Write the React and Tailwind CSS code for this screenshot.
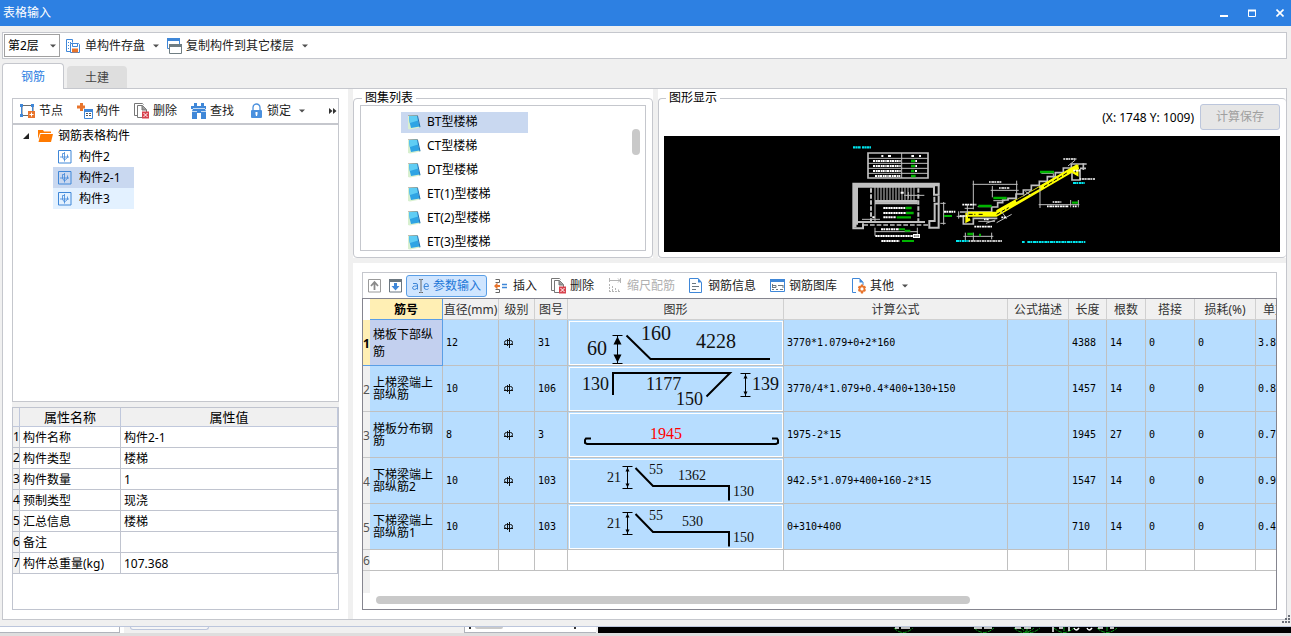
import React, { useState } from "react";
import clsx from "clsx";

const atlasItems = ["BT型楼梯", "CT型楼梯", "DT型楼梯", "ET(1)型楼梯", "ET(2)型楼梯", "ET(3)型楼梯"];

const treeItems = ["构件2", "构件2-1", "构件3"];

const properties = [
  ["构件名称", "构件2-1"],
  ["构件类型", "楼梯"],
  ["构件数量", "1"],
  ["预制类型", "现浇"],
  ["汇总信息", "楼梯"],
  ["备注", ""],
  ["构件总重量(kg)", "107.368"],
];

const columns = [
  { title: "筋号", width: "w-[73px]" },
  { title: "直径(mm)", width: "w-[56px]" },
  { title: "级别", width: "w-[36px]" },
  { title: "图号", width: "w-[33px]" },
  { title: "图形", width: "w-[216px]" },
  { title: "计算公式", width: "w-[224px]" },
  { title: "公式描述", width: "w-[61px]" },
  { title: "长度", width: "w-[38px]" },
  { title: "根数", width: "w-[39px]" },
  { title: "搭接", width: "w-[49px]" },
  { title: "损耗(%)", width: "w-[61px]" },
  { title: "单重(kg)", width: "w-[60px]" },
];

const bars = [
  { name: "梯板下部纵筋", diameter: 12, code: 31, shape: <ShapeBent />, formula: "3770*1.079+0+2*160", length: 4388, count: 14, weight: "3.8" },
  { name: "上梯梁端上部纵筋", diameter: 10, code: 106, shape: <ShapeTop />, formula: "3770/4*1.079+0.4*400+130+150", length: 1457, count: 14, weight: "0.8" },
  { name: "梯板分布钢筋", diameter: 8, code: 3, shape: <ShapeHook />, formula: "1975-2*15", length: 1945, count: 27, weight: "0.7" },
  { name: "下梯梁端上部纵筋2", diameter: 10, code: 103, shape: <ShapeStep length="1362" x={110} drop="130" />, formula: "942.5*1.079+400+160-2*15", length: 1547, count: 14, weight: "0.9" },
  { name: "下梯梁端上部纵筋1", diameter: 10, code: 103, shape: <ShapeStep length="530" x={114} drop="150" />, formula: "0+310+400", length: 710, count: 14, weight: "0.4" },
];

/* ---------- bar shapes ---------- */

function ShapeFrame({ children }) {
  return (
    <svg viewBox="0 0 215 45" className="block h-[45px] w-full" fill="none" stroke="#000" strokeWidth="2">
      <rect x="1.5" y="1.5" width="213" height="43" stroke="#fff" strokeWidth="1" />
      {children}
    </svg>
  );
}

function Num({ x, y, size, color = "#111", children }) {
  return (
    <text x={x} y={y} fontSize={size} fill={color} stroke="none" fontFamily="'Liberation Serif', serif">
      {children}
    </text>
  );
}

function Dimension({ x, top, bottom, head = 3 }) {
  const h = head * 2;
  return (
    <g strokeWidth="1">
      <path d={`M${x - 5} ${top}h10M${x - 5} ${bottom}h10M${x} ${top}V${bottom}`} />
      <path
        d={`M${x} ${top + 1}l${head} ${h}h${-head * 2}zM${x} ${bottom - 1}l${head} ${-h}h${-head * 2}z`}
        fill="#000"
        stroke="none"
      />
    </g>
  );
}

function ShapeBent() {
  return (
    <ShapeFrame>
      <Dimension x={49.5} top={15.5} bottom={43.5} head={4} />
      <path d="M58.5 15.5L82.5 39H202" />
      <Num x={19} y={35} size={20}>60</Num>
      <Num x={73} y={20} size={20}>160</Num>
      <Num x={128} y={28} size={20}>4228</Num>
    </ShapeFrame>
  );
}

function ShapeTop() {
  return (
    <ShapeFrame>
      <path d="M45 29V7H162L138.5 30.5" />
      <Dimension x={177.5} top={7.5} bottom={30.5} head={2} />
      <Num x={14} y={24} size={18}>130</Num>
      <Num x={78} y={24} size={18}>1177</Num>
      <Num x={108} y={39} size={18}>150</Num>
      <Num x={184} y={24} size={18}>139</Num>
    </ShapeFrame>
  );
}

function ShapeHook() {
  return (
    <ShapeFrame>
      <path d="M23 26.5H18L17 28V31L19 32H208L210 31V28L209 26.5H204" />
      <Num x={82} y={27} size={16} color="#f00">1945</Num>
    </ShapeFrame>
  );
}

function ShapeStep({ length, x, drop }) {
  return (
    <ShapeFrame>
      <Dimension x={59.5} top={8.5} bottom={30.5} head={2} />
      <path d="M67.5 10L85 28H161V42.5" />
      <Num x={39} y={24} size={14}>21</Num>
      <Num x={81} y={16} size={14}>55</Num>
      <Num x={x} y={22} size={14}>{length}</Num>
      <Num x={165} y={38} size={14}>{drop}</Num>
    </ShapeFrame>
  );
}

function GradeMark() {
  return (
    <svg viewBox="0 0 10 10" className="block size-[10px]" fill="none" stroke="#111">
      <path d="M3.500 1v7M5.500 0v10M0 6.500h9" />
      <rect x=".5" y="2.500" width="8" height="4" rx="2" />
    </svg>
  );
}

/* ---------- icons ---------- */

function Icon({ children }) {
  return (
    <svg viewBox="0 0 16 16" className="size-4 shrink-0" fill="none">
      {children}
    </svg>
  );
}

const Caret = ({ className }) => (
  <svg viewBox="0 0 6 4" className={clsx("h-1 w-[6px] shrink-0", className)}>
    <path d="M0 .5h6L3 3.500z" fill="#505050" />
  </svg>
);

const SaveIcon = () => (
  <Icon>
    <path d="M.5 13.500V1.500h6v3M.5 13.500H4M2 4.500h1M4 4.500h1M2 7.500h1M2 10.500h1" stroke="#3f87d8" />
    <path d="M4.500 5.500h8l1 1v8h-9z" fill="#fff" stroke="#3f87d8" />
    <path d="M6.500 5.500h5v3h-5z" fill="#fff" stroke="#3f87d8" />
    <path d="M6 10.500h6v4H6z" fill="#e8742c" />
  </Icon>
);

const CopyFloorIcon = () => (
  <Icon>
    <path d="M.5.500h12v10h-12z" fill="#fff" stroke="#3f87d8" />
    <path d="M0 0h13v3H0z" fill="#3f87d8" />
    <path d="M2.500 6.500h12v9h-12z" fill="#fff" stroke="#6f7d82" />
    <path d="M2 6h13v3H2z" fill="#6f7d82" />
  </Icon>
);

const NodeIcon = () => (
  <Icon>
    <path d="M2 2.500h11v10H2z" stroke="#444" strokeWidth=".8" />
    <path d="M0 1h3v3H0zM11 1h3v3h-3zM0 11h3v3H0z" fill="#3f87d8" />
    <path d="M1.500 3v9M12.500 3v5" stroke="#3f87d8" />
    <path d="M8 8h7v7H8z" fill="#e8742c" />
    <path d="M9.500 11.500h4M11.500 9.500v4" stroke="#fff" />
  </Icon>
);

const ComponentIcon = () => (
  <Icon>
    <path d="M3 0h3v2.500h2v3H6V8H3V5.500H0v-3h3z" fill="#e8742c" />
    <path d="M7.500 6.500h8v9h-8z" fill="#fff" stroke="#3f87d8" />
    <path d="M7 6h9v3H7z" fill="#3f87d8" />
    <path d="M9 10.500h2M12 10.500h2M9 12.500h2M12 12.500h2" stroke="#555" />
  </Icon>
);

const DeleteIcon = () => (
  <Icon>
    <path d="M3 12.500H.5V.500h8l1 1" stroke="#777" />
    <path d="M3.500 2.500h5l4 4v8h-9z" fill="#fff" stroke="#777" />
    <path d="M8 2.500v4.500h4.500" fill="#999" stroke="#777" />
    <path d="M8 8.500h7v7H8z" fill="#d8434e" />
    <path d="M9.500 10l4 4M13.500 10l-4 4" stroke="#fff" />
  </Icon>
);

const FindIcon = () => (
  <Icon>
    <path d="M3 0h3v3h4V0h3v3h2v3h-1l1 2v8h-5v-6H6v6H1V8l1-2H0V3h3z" fill="#3f87d8" />
    <path d="M1 8.500h5M10 8.500h5M2 5.500h12" stroke="#fff" strokeWidth=".7" />
  </Icon>
);

const LockIcon = () => (
  <Icon>
    <path d="M5 8V4.500a3.500 3.500 0 0 1 7 0V8" stroke="#4a90de" strokeWidth="1.300" />
    <rect x="3" y="7" width="11" height="8" rx="1" fill="#4a90de" />
    <path d="M7.500 9h2v2l-.5 2h-1l-.5-2z" fill="#fff" />
  </Icon>
);

const FolderIcon = () => (
  <Icon>
    <path d="M1 2h5l1 1.500h7V5H3l-2 6z" fill="#ff7a00" />
    <path d="M3.500 6H16l-2 8H1.500z" fill="#ff7a00" />
  </Icon>
);

const PartIcon = () => (
  <svg viewBox="0 0 14 14" className="size-[14px] shrink-0" fill="none" stroke="#3f87d8">
    <path d="M.5.500h12.500v12.500H.5z" />
    <path d="M6.500 2v9.500M2 7h9" strokeWidth=".8" />
    <path d="M6.500 3.500h-2v4l2 2.500 3-2.500v-3" strokeWidth=".8" />
  </svg>
);

const NotebookIcon = () => (
  <svg viewBox="0 0 14 16" className="h-4 w-[14px] shrink-0">
    <path d="M1 2l9-1 3.500 12.500-10.500 2-2-.5z" fill="#d8f0d0" />
    <path d="M2 2l8-.5 2.500 11L4 14 2.500 8z" fill="#2fa4e4" />
    <path d="M2 2l8-.5 1 5L3 9z" fill="#5fcdf4" />
    <path d="M10 1.500l1 .5 2.500 11-1 .5z" fill="#1d6fb5" />
    <path d="M1.500 1.500h9" stroke="#8b7d6a" strokeDasharray="1 1" />
  </svg>
);

const MoveIcon = ({ down }) => (
  <svg viewBox="0 0 13 14" className="h-[14px] w-[13px] shrink-0" fill="none">
    <path d="M.5.500h12v12.500H.5z" stroke={down ? "#6b7780" : "#9a9a9a"} />
    {down ? (
      <>
        <path d="M0 0h13v3H0z" fill="#6b7780" />
        <path d="M5 4h3v3h2.500l-4 4.500-4-4.500H5z" fill="#3f87d8" />
      </>
    ) : (
      <path d="M6.500 11V4M3 7l3.500-4L10 7" stroke="#8a8a8a" strokeWidth="1.800" />
    )}
  </svg>
);

const InsertIcon = () => (
  <Icon>
    <path d="M1.500 1.500h4v3h-4M1.500 11.500h4v3h-4" stroke="#666" />
    <path d="M8 6.500h5M8 9.500h5" stroke="#3f87d8" strokeWidth="1.500" />
    <path d="M0 8l3.500-3.500V7H6v2H3.500v2.500z" fill="#e8742c" />
  </Icon>
);

const ScaleIcon = () => (
  <Icon>
    <path d="M1.500 0v4M1.500 2.500h11M12.500 0v5M10 .5l2 2-2 2" stroke="#b4b4b4" />
    <path d="M1.500 6v8M4.500 8v6M7.500 10v4M10.500 11.500V14M1 13.500h12" stroke="#b4b4b4" strokeDasharray="2 1" />
  </Icon>
);

const InfoIcon = () => (
  <Icon>
    <path d="M.5.500h8.500l3.500 4v10H.5z" stroke="#3f87d8" fill="#fff" />
    <path d="M9 0l4 4.500H9z" fill="#3f87d8" />
    <path d="M3 5.500h4M3 8.500h7M3 11.500h4" stroke="#6b7780" />
  </Icon>
);

const LibraryIcon = () => (
  <Icon>
    <path d="M.5 1.500h14v12H.5z" fill="#fff" stroke="#3f87d8" />
    <path d="M0 1h15v3H0z" fill="#3f87d8" />
    <path d="M2.500 6v3M2 9.500h4v-2H3M8 7.500h5M2 11.500h2M6 11.500h2M10 11.500h3M13 7v3" stroke="#6b7780" />
  </Icon>
);

const OtherIcon = () => (
  <Icon>
    <path d="M5 14.500H1.500V.500h7l3.500 4V7" stroke="#3f87d8" fill="#fff" />
    <path d="M8.500 0l4 4.500h-4z" fill="#3f87d8" />
    <path
      d="M10 6.500h2l.5 1.500 1.500-.3 1 1.700-1 1.300 1 1.300-1 1.700-1.500-.2L12 15.500h-2l-.6-2-1.500.2-1-1.700 1-1.300-1-1.300 1-1.700 1.500.3z"
      fill="#e8742c"
    />
    <circle cx="11" cy="10.900" r="1.600" fill="#fff" />
  </Icon>
);

const ParamIcon = () => (
  <svg viewBox="0 0 18 16" className="h-4 w-[18px] shrink-0" fill="none" stroke="#3f87d8">
    <path d="M1 5.500h3q1.500 0 1.500 1.500v4.500M5.500 8H2.500Q.5 8.500.5 9.800T2.300 11.500Q4.500 11.500 5.500 9.500" />
    <path d="M12 8.500h4.500Q16.500 5.500 14.300 5.500T12 8.500t2.500 3q1.300 0 2-.8" />
    <path d="M7 1.500h1.500L9 2l.5-.5H11M9 2v11.500M7 14.500h1.500l.5-.5.5.5H11" stroke="#666" />
  </svg>
);

/* ---------- pieces ---------- */

function ToolButton({ icon, label, caret, disabled, active, padding = "px-[7px]" }) {
  return (
    <button
      type="button"
      disabled={disabled}
      className={clsx(
        "flex h-[22px] shrink-0 items-center gap-[3px] rounded-[3px] whitespace-nowrap",
        padding,
        disabled && "text-[#b0b0b0]",
        active && "border border-[#5a9ee6] bg-[#cfe5ff] text-[#1f78d8]",
        !disabled && !active && "text-[#222]"
      )}
    >
      {icon}
      {label}
      {caret && <Caret className="ml-[5px]" />}
    </button>
  );
}

function GroupBox({ title, className = "border-r px-[6px]", children }) {
  return (
    <fieldset className={clsx("h-[167px] min-w-0 rounded-[4px] border-y border-l border-[#c5c7cd] pb-[6px]", className)}>
      <legend className="ml-[2px] px-[3px] text-black leading-[14px]">{title}</legend>
      {children}
    </fieldset>
  );
}

// coordinates are in thirds of a pixel of the 116px high canvas
function StairDrawing() {
  return (
    <svg viewBox="0 0 616 116" className="block h-full w-full" fill="none">
      <g transform="translate(176 0) scale(.33333)">
        {/* parameter table */}
        <path d="M84 51h180v75H84z" stroke="#c0c0c0" strokeWidth="5" />
        <path d="M84 67h180M84 82h180M84 97h180M84 112h180M185 51v75" stroke="#c0c0c0" strokeWidth="3" />
        <path d="M124 60h6M144 60h9M214 60h8M237 60h6" stroke="#fff" strokeWidth="6" />
        <path d="M99 75h84M99 90h84M99 105h84M105 120h76" stroke="#fff" strokeWidth="6" strokeDasharray="7 2 4 1" />
        <path d="M213 75h12M213 90h12M213 105h10M213 120h14" stroke="#00b400" strokeWidth="7" />
        <path d="M226 75h5M226 90h5M225 105h6" stroke="#fff" strokeWidth="6" />
        <path d="M39 34h24M66 34h28" stroke="#00e5ee" strokeWidth="7" strokeDasharray="8 1 4 1" />

        {/* plan */}
        <path d="M69 262v15H40V143h256v33h-14v-24H51v114" stroke="#c0c0c0" strokeWidth="6" />
        <path d="M40 146h258" stroke="#c0c0c0" strokeWidth="10" />
        <path d="M45 146v128" stroke="#c0c0c0" strokeWidth="9" />
        <path d="M283 182v16M296 180v20M284 203h12v72h-28v-20h16z" stroke="#c0c0c0" strokeWidth="6" />
        <path d="M51 258h204M105 202h128" stroke="#c0c0c0" strokeWidth="6" />
        <path d="M105 196h128" stroke="#c0c0c0" strokeWidth="8" />
        <path d="M93 157v100M235 157v100" stroke="#c0c0c0" strokeWidth="6" strokeDasharray="13 5" />
        <path d="M70 267h195" stroke="#c0c0c0" strokeWidth="5" strokeDasharray="14 6" />
        <path
          d="M105 153v104M114 153v40M123 153v40M132 153v40M141 153v40M150 153v40M159 153v40M168 153v40M177 153v40M186 153v40M195 153v40M204 153v40M213 153v40M222 153v40"
          stroke="#c0c0c0"
          strokeWidth="3"
        />
        <path d="M193 178h60M66 250h54M205 168v20" stroke="#c0c0c0" strokeWidth="3" />
        <path d="M130 216h66M130 231h70M130 244h38M182 170h10M97 244h8" stroke="#fff" strokeWidth="6" strokeDasharray="7 1 5 2" />
        <path d="M197 216h18M198 231h23M170 244h43" stroke="#00b400" strokeWidth="7" />
        <path d="M104 287h130M105 275v24M232 275v20M301 202h16M311 198v68M301 262h16" stroke="#c0c0c0" strokeWidth="3" />
        <path d="M123 280h54M106 300h112M124 315h54M312 227h34" stroke="#fff" strokeWidth="6" strokeDasharray="7 1 5 2" />
        <path d="M177 280h18M194 284h17M186 315h36M312 240h24" stroke="#00b400" strokeWidth="6" />
        <path d="M219 294h21v12h-21z" fill="#fff" />
        <path d="M222 300h15" stroke="#666" strokeWidth="4" strokeDasharray="3 1" />

        {/* section */}
        <path
          d="M360 228h95v-15h18v-13h15v-8h16v-5h24v-13h22v-12h24v-14h24v-12h24v-14h24v-12h24v-14h24V84h46M358 241h12v23h30v-17h72"
          stroke="#c0c0c0"
          strokeWidth="5"
        />
        <path d="M696 92v40h24v-33M720 97h18M730 82v20" stroke="#c0c0c0" strokeWidth="5" />
        <path d="M380 235h88L714 91" stroke="#ff0" strokeWidth="15" />
        <path d="M380 231v24l10-6" stroke="#ff0" strokeWidth="8" />
        <path d="M470 226l60-34M600 153l112-62v25l-14-8" stroke="#ff0" strokeWidth="7" />
        <path d="M386 235h20M416 235h16M470 235l36-20M612 152l70-42" stroke="#000" strokeWidth="3" strokeDasharray="12 5" />
        <path d="M528 196l70-40" stroke="#000" strokeWidth="5" />
        <path d="M550 180l22-16M556 166l16 12" stroke="#c0c0c0" strokeWidth="3" />
        <path
          d="M398 145h135M400 134v86M530 134v56M452 163h84M457 150v34M374 217h28M382 205v32M413 212h40M460 194h36M415 256h50M438 262l28-10M470 260l45-25M484 226l16 22"
          stroke="#c0c0c0"
          strokeWidth="3"
        />
        <path d="M596 206h122M600 152v64M692 192v22M715 192v22M604 112h36v14M684 90l22-18M356 226v22M350 241h22" stroke="#c0c0c0" strokeWidth="3" />
        <path d="M370 301h90M376 290v24M400 290v24M455 290v20" stroke="#c0c0c0" strokeWidth="3" />
        <path
          d="M447 138h38M477 156h32M367 206h42M670 69h40M719 129h46M638 198h26M621 211h65M698 211h12M403 272h54M386 315h100M360 240h20M432 250h14M484 244h14M700 104h20"
          stroke="#fff"
          strokeWidth="5"
          strokeDasharray="5 2 8 1"
        />
        <path d="M415 210h40M460 186h40M600 108h42M696 200h18M382 294h18M417 297h6" stroke="#00b400" strokeWidth="7" />
        <path d="M348 315h38M699 141h36M546 318h8M562 318h174" stroke="#00e5ee" strokeWidth="6" strokeDasharray="9 1 5 2" />
      </g>
    </svg>
  );
}

function PropertyTable() {
  return (
    <div className="h-[203px] shrink-0 border border-[#c0c4cf] bg-white">
      <table className="w-full table-fixed border-separate border-spacing-0 text-black">
        <thead>
          <tr className="h-[19px] bg-[#f0f0f0]">
            <th className="w-[7px] border-r border-b border-[#c0c8dc] p-0" />
            <th className="w-[101px] border-r border-b border-[#c0c8dc] p-0 text-[13px] leading-[18px] font-normal">属性名称</th>
            <th className="border-r border-b border-[#c0c8dc] p-0 text-[13px] leading-[18px] font-normal">属性值</th>
          </tr>
        </thead>
        <tbody>
          {properties.map(([name, value], i) => (
            <tr key={name} className="h-[21px]">
              <th className="border-r border-b border-[#c0c4cf] bg-[#f0f0f0] p-0 font-normal">{i + 1}</th>
              <td className="border-r border-b border-[#c0c4cf] px-[3px] pt-px pb-0">{name}</td>
              <td className="border-r border-b border-[#c0c4cf] px-[3px] pt-px pb-0">{value}</td>
            </tr>
          ))}
        </tbody>
      </table>
    </div>
  );
}

function BarTable() {
  const cell = "border-r border-b border-[#c0c0c0] px-[3px] py-0 font-['DejaVu_Sans_Mono','Noto_Sans_CJK_SC',monospace] text-[10px]";
  return (
    <div className="flex min-h-0 flex-1 flex-col overflow-hidden border border-[#85858f] bg-white">
      <div className="relative min-h-0 flex-1 overflow-hidden">
        <div className="h-full w-[7px] bg-[#f0f0f0]" />
        <table className="absolute top-0 left-0 w-[953px] table-fixed border-separate border-spacing-0">
          <thead>
            <tr className="h-[21px] bg-[#f0f0f0] text-[#333]">
              <th className="w-[7px] bg-white p-0" />
              {columns.map((col, i) => (
                <th
                  key={col.title}
                  className={clsx(
                    "border-r border-b px-0 pt-px pb-0 whitespace-nowrap",
                    col.width,
                    i === 0 ? "border-[#5a9ee6] bg-[#ffefb4] font-bold text-black" : "border-[#d0d0d0] font-normal"
                  )}
                >
                  {col.title}
                </th>
              ))}
            </tr>
          </thead>
          <tbody className="text-black">
            {bars.map((bar, i) => (
              <tr key={bar.name} className="h-[46px] bg-[#b7ddff]">
                <th
                  className={clsx(
                    "border-b px-0 pt-[2px] pb-0",
                    i === 0 ? "border-[#5a9ee6] bg-[#ffefb4] font-bold" : "border-[#c8c8c8] bg-[#f0f0f0] font-normal text-[#555]"
                  )}
                >
                  {i + 1}
                </th>
                <td
                  className={clsx(
                    "border-r border-b py-0 pr-[5px] pl-[3px] break-all",
                    i === 0 ? "border-[#5a9ee6] bg-[#c3d0ef] leading-[17px]" : "border-[#c0c0c0] leading-[12px]"
                  )}
                >
                  {bar.name}
                </td>
                <td className={cell}>{bar.diameter}</td>
                <td className={clsx(cell, "pl-[5px]")}>
                  <GradeMark />
                </td>
                <td className={cell}>{bar.code}</td>
                <td className="border-r border-b border-[#c0c0c0] p-0">{bar.shape}</td>
                <td className={cell}>{bar.formula}</td>
                <td className={cell} />
                <td className={cell}>{bar.length}</td>
                <td className={cell}>{bar.count}</td>
                <td className={cell}>0</td>
                <td className={cell}>0</td>
                <td className={clsx(cell, "pl-[2px]")}>{bar.weight}</td>
              </tr>
            ))}
            <tr className="h-[21px] bg-white">
              <th className="border-b border-[#c8c8c8] bg-[#f0f0f0] px-0 pt-[2px] pb-0 font-normal text-[#555]">6</th>
              {columns.map((col) => (
                <td key={col.title} className="border-r border-b border-[#c0c0c0] p-0" />
              ))}
            </tr>
          </tbody>
        </table>
      </div>
      <div className="h-4 shrink-0 px-[13px] pt-[3px]">
        <div className="h-2 w-[67%] rounded-full bg-[#c9c9c9]" />
      </div>
    </div>
  );
}

function Background() {
  return (
    <div className="flex h-[10px] shrink-0 flex-col border-t border-[#bcc6dc] bg-[#f0f0f0]">
      <div className="flex h-[6px]">
        <div className="w-[120px] border-r border-b border-[#b0b4bc] bg-white" />
        <div className="w-1 bg-white" />
        <div className="ml-[6px] h-[3px] w-[79px] rounded-b-[3px] border border-t-0 border-[#bcc6dc] bg-[#f6f6f6]" />
        <div className="ml-auto flex w-[132px] justify-between border-b border-l border-[#b0b4bc] bg-white px-1">
          <span className="h-[2px] w-[2px] bg-[#333]" />
          <span className="mr-auto ml-1 h-[2px] w-7 rounded-b bg-[#c9c9c9]" />
          <span className="mr-4 h-[2px] w-[2px] bg-[#333]" />
        </div>
        <svg viewBox="0 0 693 6" className="ml-[2px] h-[6px] w-[693px] shrink-0 bg-black" fill="none">
          <g stroke="#0a9a1a" strokeDasharray="4 1">
            <path d="M296 1q9 9 19 0M376 1q10 9 20 0M416 1q10 9 20 0M423 1q9 9 19 0M456 1q10 9 20 0M499 1q10 9 20 0M429 0v6M466 0v6M509 0v6" />
          </g>
          <path
            d="M297 1h4M303 1h9M376 1h8M386 1h8M417 1h6M426 1h7M455 0v5M461 1h4M471 0v4M476 1q2 4 5 0M489 1q2 4 5 0M500 1h5M512 1h4"
            stroke="#fff"
            strokeWidth="1.500"
          />
        </svg>
      </div>
      <div className="flex-1 bg-[#dedede]" />
    </div>
  );
}

export default function App() {
  const [tab, setTab] = useState("钢筋");
  const [selected, setSelected] = useState("构件2-1");
  const [atlas, setAtlas] = useState("BT型楼梯");

  return (
    <div className="relative flex h-screen flex-col overflow-hidden bg-[#f0f0f0] font-['Noto_Sans','Noto_Sans_CJK_SC',sans-serif] text-[12px] leading-4 text-[#222]">
      {/* Title bar */}
      <header className="flex h-[26px] shrink-0 items-center bg-[#2d80e2] pl-[3px] text-white">
        <h1>表格输入</h1>
        <div className="ml-auto flex gap-[6px]">
          <button type="button" aria-label="最小化" className="flex h-6 w-[22px] items-center justify-center">
            <svg viewBox="0 0 8 8" className="size-2"><path d="M0 7h8" stroke="#fff" strokeWidth="2" /></svg>
          </button>
          <button type="button" aria-label="最大化" className="flex h-6 w-[22px] items-center justify-center">
            <svg viewBox="0 0 8 8" className="size-2" fill="none">
              <path d="M.5 1.500h7v6h-7z" stroke="#fff" />
              <path d="M0 1.500h8" stroke="#fff" strokeWidth="2" />
            </svg>
          </button>
          <button type="button" aria-label="关闭" className="flex h-6 w-[22px] items-center justify-center">
            <svg viewBox="0 0 8 8" className="size-2"><path d="M.5.500l7 7M7.500.500l-7 7" stroke="#fff" strokeWidth="1.600" /></svg>
          </button>
        </div>
      </header>

      {/* Floor toolbar */}
      <div className="mt-[6px] mr-1 ml-[2px] flex h-[27px] shrink-0 items-center border border-[#c5c7cd] bg-white pl-px">
        <div className="relative mr-[2px]">
          <select aria-label="楼层" className="h-[23px] w-14 appearance-none border border-[#a0a0a0] bg-white pl-[3px] text-black">
            <option>第2层</option>
          </select>
          <Caret className="pointer-events-none absolute top-[10px] right-1" />
        </div>
        <ToolButton icon={<SaveIcon />} label="单构件存盘" caret padding="px-1" />
        <ToolButton icon={<CopyFloorIcon />} label="复制构件到其它楼层" caret padding="px-1" />
      </div>

      {/* Tabs */}
      <div role="tablist" className="z-10 mt-1 -mb-px ml-[2px] flex h-[26px] shrink-0 items-end gap-[3px]">
        {["钢筋", "土建"].map((name) => (
          <button
            key={name}
            type="button"
            role="tab"
            aria-selected={tab === name}
            onClick={() => setTab(name)}
            className={clsx(
              "rounded-t-[4px]",
              tab === name
                ? "h-[26px] w-[62px] border border-b-0 border-[#c5c7cd] bg-white text-[#2d80e2]"
                : "mb-px h-[22px] w-[60px] bg-[#dedede] pt-px text-[#444]"
            )}
          >
            {name}
          </button>
        ))}
      </div>

      <main className="mr-1 mb-[6px] ml-[2px] flex min-h-0 flex-1 border border-[#c5c7cd] bg-[#f0f0f0]">
        {/* Component tree and its properties */}
        <section className="flex w-[345px] shrink-0 flex-col bg-white p-[9px]">
          <div className="flex h-[25px] shrink-0 items-center border border-b-0 border-[#c5c7cd]">
            <ToolButton icon={<NodeIcon />} label="节点" />
            <ToolButton icon={<ComponentIcon />} label="构件" />
            <ToolButton icon={<DeleteIcon />} label="删除" />
            <ToolButton icon={<FindIcon />} label="查找" />
            <ToolButton icon={<LockIcon />} label="锁定" caret />
            <button type="button" aria-label="更多" className="mr-px ml-auto shrink-0">
              <svg viewBox="0 0 8 6" className="h-[6px] w-2"><path d="M0 0l3.500 3L0 6zM4 0l3.500 3L4 6z" fill="#333" /></svg>
            </button>
          </div>
          <div className="min-h-0 flex-1 border border-t-2 border-[#c5c7cd] text-black">
            <div className="flex h-[21px] items-center pl-[10px]">
              <svg viewBox="0 0 6 6" className="size-[6px]"><path d="M6 0v6H0z" fill="#222" /></svg>
              <span className="ml-2 flex items-center gap-[5px]">
                <FolderIcon />
                钢筋表格构件
              </span>
            </div>
            <ul className="ml-10 w-[81px]">
              {treeItems.map((name) => (
                <li key={name}>
                  <button
                    type="button"
                    onClick={() => setSelected(name)}
                    className={clsx(
                      "flex h-[21px] w-full items-center gap-[7px] pl-[5px]",
                      selected === name ? "bg-[#c9d8f0]" : name === "构件3" && "bg-[#e3f1ff]"
                    )}
                  >
                    <PartIcon />
                    {name}
                  </button>
                </li>
              ))}
            </ul>
          </div>
          <div className="h-[5px] shrink-0 bg-[#f0f0f0]" />
          <PropertyTable />
        </section>

        <div className="ml-[5px] flex min-w-0 flex-1 flex-col gap-[5px]">
          <div className="flex h-[169px] shrink-0 gap-[5px]">
            {/* Atlas list */}
            <div className="w-[300px] shrink-0 bg-white pt-[2px]">
              <GroupBox title="图集列表">
                <div className="flex h-[146px] justify-between overflow-hidden border border-[#c5c7cd] pr-[5px] pl-10">
                  <ul className="w-[127px] pt-1 text-black">
                    {atlasItems.map((name) => (
                      <li key={name} className="flex h-6 items-center">
                        <button
                          type="button"
                          onClick={() => setAtlas(name)}
                          className={clsx(
                            "flex h-[21px] w-full items-center gap-[6px] pl-[6px]",
                            atlas === name && "bg-[#c9d8f0]"
                          )}
                        >
                          <NotebookIcon />
                          {name}
                        </button>
                      </li>
                    ))}
                  </ul>
                  <div className="mt-[23px] h-[26px] w-2 rounded-full bg-[#c9c9c9]" />
                </div>
              </GroupBox>
            </div>

            {/* Drawing preview */}
            <div className="min-w-0 flex-1 bg-white pt-[2px]">
              <GroupBox title="图形显示" className="pr-[6px] pl-[5px]">
                <div className="flex h-[31px] items-start justify-end gap-[6px] text-black">
                  <span className="pt-[5px]">(X: 1748 Y: 1009)</span>
                  <button type="button" disabled className="-mt-px h-[26px] w-20 rounded-[3px] border border-[#bcc6dc] bg-[#e6e6e6] text-[#a0a0a0]">
                    计算保存
                  </button>
                </div>
                <div className="h-[116px] bg-black">
                  <StairDrawing />
                </div>
              </GroupBox>
            </div>
          </div>

          {/* Bar list */}
          <section className="flex min-h-0 flex-1 flex-col bg-white p-[9px]">
            <div className="flex h-[26px] shrink-0 items-center border border-b-0 border-[#c5c7cd] pl-[5px]">
              <button type="button" aria-label="上移" className="mr-2"><MoveIcon /></button>
              <button type="button" aria-label="下移" className="mr-1"><MoveIcon down /></button>
              <ToolButton icon={<ParamIcon />} label="参数输入" active padding="px-[5px]" />
              <ToolButton icon={<InsertIcon />} label="插入" />
              <ToolButton icon={<DeleteIcon />} label="删除" />
              <ToolButton icon={<ScaleIcon />} label="缩尺配筋" disabled />
              <ToolButton icon={<InfoIcon />} label="钢筋信息" />
              <ToolButton icon={<LibraryIcon />} label="钢筋图库" />
              <ToolButton icon={<OtherIcon />} label="其他" caret />
            </div>
            <BarTable />
          </section>
        </div>
      </main>

      <Background />

      {/* Resize grip */}
      <svg viewBox="0 0 9 9" className="absolute right-0 bottom-3 size-[9px]">
        <path d="M6 0h2v2H6zM3 3h2v2H3zM6 3h2v2H6zM0 6h2v2H0zM3 6h2v2H3zM6 6h2v2H6z" fill="#6b6f78" />
      </svg>
    </div>
  );
}
